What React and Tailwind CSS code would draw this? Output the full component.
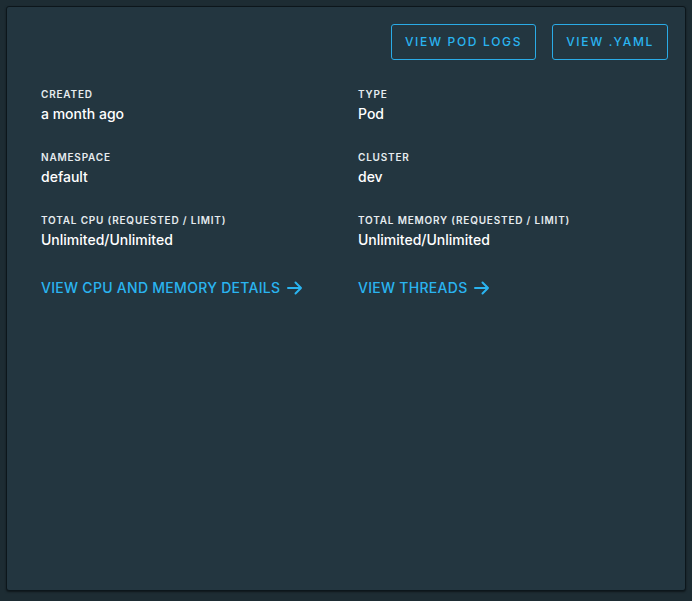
const FIELDS = [
  ['Created', 'a month ago', 'Type', 'Pod'],
  ['Namespace', 'default', 'Cluster', 'dev'],
  ['Total CPU (Requested / Limit)', 'Unlimited/Unlimited', 'Total Memory (Requested / Limit)', 'Unlimited/Unlimited'],
]

function Arrow() {
  return (
    <svg width="18" height="18" viewBox="0 0 18 18" fill="none" stroke="currentColor" strokeWidth="2" strokeLinecap="round" strokeLinejoin="round" className="ml-[6px]">
      <path d="M2 9h13M9.5 3.5L15 9l-5.5 5.5" />
    </svg>
  )
}

function Field({ label, value }) {
  return (
    <div>
      <div className="text-[10px] font-semibold uppercase tracking-[0.08em] text-[#e6ecef] leading-[14px]">{label}</div>
      <div className="text-[14px] font-medium text-white leading-[20px] mt-[3px]">{value}</div>
    </div>
  )
}

export default function App() {
  return (
    <div className="w-[692px] h-[601px] bg-[#1d2c33] p-[6px] pb-[10px]" style={{ fontFamily: 'Inter, "Open Sans", sans-serif' }}>
      <div className="h-full bg-[#233640] border border-[#0c161b] rounded-[3px] shadow-[0_1px_2px_rgba(0,0,0,0.5)] px-[34px] pt-[17px]">
        <div className="flex justify-end gap-4 -mr-[17px]">
          <button className="h-[36px] px-[13px] border border-[#2aabe6] rounded-[3px] text-[#2ab4f0] text-[12px] font-medium tracking-[0.14em] uppercase">View pod logs</button>
          <button className="h-[36px] px-[13px] border border-[#2aabe6] rounded-[3px] text-[#2ab4f0] text-[12px] font-medium tracking-[0.14em] uppercase">View .yaml</button>
        </div>
        <div className="grid grid-cols-[317px_1fr] mt-[27px] gap-y-[26px]">
          {FIELDS.map((r, i) => (
            <div key={i} className="contents">
              <Field label={r[0]} value={r[1]} />
              <Field label={r[2]} value={r[3]} />
            </div>
          ))}
        </div>
        <div className="grid grid-cols-[317px_1fr] mt-[27px]">
          <a className="flex items-center text-[14px] font-medium tracking-[0.02em] uppercase text-[#2ab4f0]">View CPU and memory details<Arrow /></a>
          <a className="flex items-center text-[14px] font-medium tracking-[0.02em] uppercase text-[#2ab4f0]">View threads<Arrow /></a>
        </div>
      </div>
    </div>
  )
}
